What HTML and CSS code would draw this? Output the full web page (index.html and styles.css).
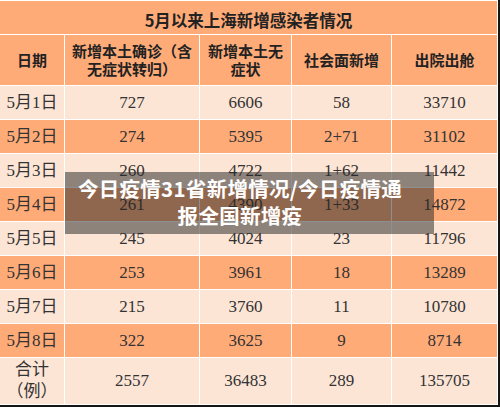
FILE: index.html
```html
<!DOCTYPE html>
<html lang="zh-CN">
<head>
<meta charset="utf-8">
<title>5月以来上海新增感染者情况</title>
<link rel="stylesheet" href="styles.css">
</head>
<body>
<div class="page">
  <div class="frame">
    <div class="grid">
      <div class="cell title">5月以来上海新增感染者情况</div>

      <div class="cell head">日期</div>
      <div class="cell head">新增本土确诊（含无症状转归）</div>
      <div class="cell head">新增本土无症状</div>
      <div class="cell head">社会面新增</div>
      <div class="cell head">出院出舱</div>

      <div class="cell light">5月1日</div><div class="cell light">727</div><div class="cell light">6606</div><div class="cell light">58</div><div class="cell light">33710</div>
      <div class="cell dark">5月2日</div><div class="cell dark">274</div><div class="cell dark">5395</div><div class="cell dark">2+71</div><div class="cell dark">31102</div>
      <div class="cell light">5月3日</div><div class="cell light">260</div><div class="cell light">4722</div><div class="cell light">1+62</div><div class="cell light">11442</div>
      <div class="cell dark">5月4日</div><div class="cell dark">261</div><div class="cell dark">4390</div><div class="cell dark">1+33</div><div class="cell dark">14872</div>
      <div class="cell light">5月5日</div><div class="cell light">245</div><div class="cell light">4024</div><div class="cell light">23</div><div class="cell light">11796</div>
      <div class="cell dark">5月6日</div><div class="cell dark">253</div><div class="cell dark">3961</div><div class="cell dark">18</div><div class="cell dark">13289</div>
      <div class="cell light">5月7日</div><div class="cell light">215</div><div class="cell light">3760</div><div class="cell light">11</div><div class="cell light">10780</div>
      <div class="cell dark">5月8日</div><div class="cell dark">322</div><div class="cell dark">3625</div><div class="cell dark">9</div><div class="cell dark">8714</div>
      <div class="cell light total">合计<br>（例）</div><div class="cell light">2557</div><div class="cell light">36483</div><div class="cell light">289</div><div class="cell light">135705</div>
    </div>
  </div>
  <div class="caption">今日疫情31省新增情况/今日疫情通<br>报全国新增疫</div>
</div>
</body>
</html>
```

FILE: styles.css
```css
html, body {
  margin: 0;
  padding: 0;
  background: #fff;
}

.page {
  position: relative;
  width: 500px;
  height: 407px;
  overflow: hidden;
}

.frame {
  width: 497px;
  padding: 1px 1px 1px 0;
  border-right: 2px solid #151515;
  border-bottom: 2px solid #151515;
  background: #fff;
}

.grid {
  display: grid;
  grid-template-columns: 64px 134px 91px 99px 105px;
  grid-template-rows: 33px 50px repeat(8, 33px) 46px;
  gap: 1px;
  background: #fff;
}

.cell {
  display: flex;
  align-items: center;
  justify-content: center;
  text-align: center;
  font-family: "Liberation Serif", "Noto Sans CJK SC", serif;
  font-size: 17px;
  color: #333;
  line-height: 22px;
}

.title {
  grid-column: 1 / -1;
  background: #ffab78;
  font-family: "Noto Sans CJK SC", sans-serif;
  font-weight: 700;
  font-size: 16.5px;
  color: #222;
  padding-top: 4px;
}

.head {
  background: #ffab78;
  font-family: "Noto Sans CJK SC", sans-serif;
  font-weight: 700;
  font-size: 15px;
  line-height: 18px;
  color: #222;
  padding: 0 6px;
}

.light {
  background: #fde5d6;
}

.dark {
  background: #ffab78;
}

.total {
  line-height: 22px;
}

.caption {
  position: absolute;
  left: 65px;
  top: 172px;
  width: 334px;
  height: 59px;
  padding: 3px 27px 0 8px;
  background: rgba(40, 40, 40, 0.52);
  color: #fff;
  font-family: "Noto Sans CJK SC", sans-serif;
  font-weight: 700;
  font-size: 20.5px;
  letter-spacing: 0.3px;
  line-height: 27px;
  text-align: center;
}
```
